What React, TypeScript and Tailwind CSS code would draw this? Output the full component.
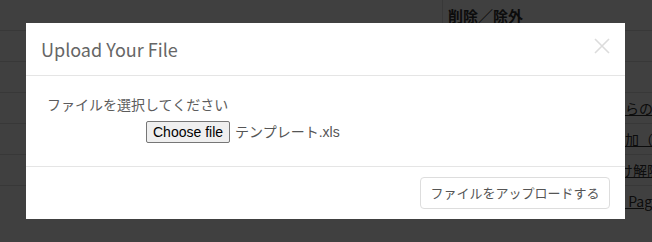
const rows = [
  { hidden: "", shown: "", width: "" },
  { hidden: "", shown: "", width: "" },
  { hidden: "メールマガジン配信リストか", shown: "らの除外", width: "w-[178px]" },
  { hidden: "ユーザーグループへの一括追", shown: "加（キャンペーン）", width: "w-[178px]" },
  { hidden: "サービスアカウントの紐付", shown: "け解除", width: "w-[172px]" },
  { hidden: "外部連携の解除：Facebook", shown: " Page", width: "w-[178px]" },
];

const CloseIcon = () => (
  <svg width="16" height="16" viewBox="0 0 16 16" fill="none">
    <path d="M1 1L15 15M15 1L1 15" stroke="#dcdcdc" strokeWidth="1.6" />
  </svg>
);

const App = () => {
  return (
    <div className="relative w-[652px] h-[242px] overflow-hidden bg-white font-['Noto_Sans_CJK_JP',sans-serif] text-[14px] text-[#333]">
      {/* page behind the dialog */}
      <div className="flex flex-col">
        <div className="flex h-[30px]">
          <div className="w-[442px] shrink-0" />
          <div className="flex-1 border-l border-[#ddd] pl-[5px] flex items-center text-[15px] font-bold leading-none">
            削除／除外
          </div>
        </div>
        {rows.map((row, i) => (
          <div key={i} className="flex h-[31px] border-t border-[#ddd]">
            <div className="w-[447px] shrink-0" />
            <div className="flex-1 min-w-0 overflow-hidden flex items-center whitespace-pre">
              {row.shown && (
                <>
                  <span className={`${row.width} shrink-0 inline-block overflow-hidden underline`}>{row.hidden}</span>
                  <span className="shrink-0 underline">{row.shown}</span>
                </>
              )}
            </div>
          </div>
        ))}
      </div>

      {/* backdrop */}
      <div className="absolute inset-0 bg-black/75" />

      {/* dialog */}
      <div className="absolute left-[26px] top-[23px] w-[599px] bg-white">
        <div className="relative px-[15px] pt-[15px] pb-[15px] border-b border-[#e5e5e5]">
          <h4 className="text-[18px] leading-[22px] text-[#666]">Upload Your File</h4>
          <button type="button" className="absolute right-[15px] top-[15px]">
            <CloseIcon />
          </button>
        </div>

        <div className="px-[15px] pt-[18px] pb-[23px] border-b border-[#e5e5e5]">
          <div className="ml-[6px] leading-[20px] text-[#5c5c5c]">ファイルを選択してください</div>
          <div className="mt-[7px] ml-[105px] flex items-center">
            <span className="h-[22px] px-[6px] flex items-center bg-[#efefef] border border-[#767676] rounded-[2px] font-['Liberation_Sans','Noto_Sans_CJK_JP',sans-serif] text-black">
              Choose file
            </span>
            <span className="ml-[5px] font-['Liberation_Sans','Noto_Sans_CJK_JP',sans-serif] text-[#555]">
              テンプレート.xls
            </span>
          </div>
        </div>

        <div className="px-[15px] pt-[10px] pb-[10px] flex justify-end">
          <button
            type="button"
            className="w-[190px] h-[32px] flex items-center justify-center border border-[#ddd] rounded-[4px] bg-white text-[13px] text-[#555]"
          >
            ファイルをアップロードする
          </button>
        </div>
      </div>
    </div>
  );
};

export default App;
